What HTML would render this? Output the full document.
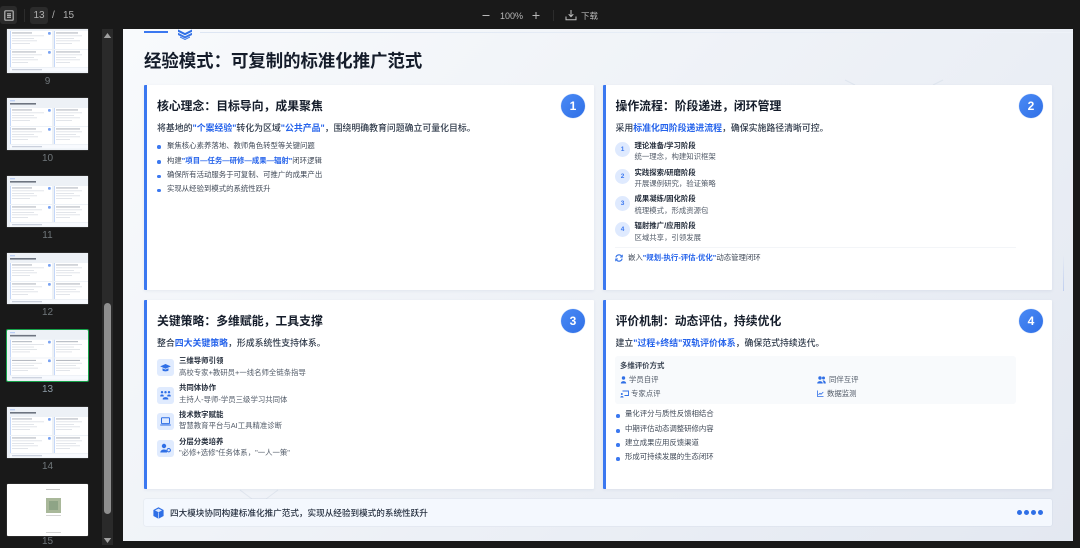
<!DOCTYPE html>
<html lang="zh-CN">
<head>
<meta charset="utf-8">
<title>经验模式</title>
<style>
html,body{margin:0;padding:0;background:#191919;}
body{position:relative;width:1080px;height:545px;overflow:hidden;font-family:"Liberation Sans","Noto Sans CJK SC",sans-serif;filter:blur(.3px);}
div,span.a,svg.a{position:absolute;}
.t{position:absolute;white-space:nowrap;line-height:12px;height:12px;}
.tb{color:#b8b8b8;font-size:9px;}
.pg{color:#b0b0b0;font-size:10px;}
.pn{color:#70777b;font-size:10px;left:7px;width:81px;text-align:center;}
.card{background:#fff;border-left:3px solid #3b78f0;box-sizing:border-box;box-shadow:0 1px 3px rgba(30,60,120,.07);border-radius:1px;}
.h{font-size:11.85px;font-weight:700;color:#141c2a;line-height:14px;height:14px;}
.in{font-size:8.9px;color:#2f3a4a;font-weight:500;}
.in b,.li b,.lp b{color:#2563eb;font-weight:700;}
.li{font-size:7.4px;color:#414a58;}
.lp{font-size:7.4px;color:#414a58;}
.st{font-size:7.4px;color:#262f3d;font-weight:700;}
.su{font-size:7.4px;color:#525b68;}
.dot{width:3.5px;height:3.5px;border-radius:50%;background:#3b78f0;}
.num{width:24px;height:24px;border-radius:50%;background:linear-gradient(135deg,#4a8af5,#2f6fe6);color:#fff;font-weight:700;font-size:12px;line-height:24px;text-align:center;box-shadow:0 0 0 .5px #dbe6fb;}
.c{width:15px;height:15px;border-radius:50%;background:#dfeafe;color:#3b78f0;font-weight:700;font-size:6.5px;line-height:15px;text-align:center;}
.ib{width:17px;height:17px;border-radius:3px;background:#e0ebfe;}
.thumb{left:7px;width:81px;overflow:hidden;box-shadow:0 0 1px #888;}
.thumb svg,.thumb div{filter:blur(.25px);}
</style>
</head>
<body>

<!-- thumbnail art (bars only) -->
<svg width="0" height="0" style="position:absolute">
  <defs>
    <symbol id="th" viewBox="0 0 81 52">
      <rect width="81" height="52" fill="#edf1f6"/>
      <rect x="3" y="2.500" width="5" height=".7" fill="#8fb0f2"/>
      <rect x="3" y="5" width="26" height="1.600" fill="#6d7480"/>
      <rect x="3" y="10" width="42" height="18" fill="#fff"/>
      <rect x="47" y="10" width="34" height="18" fill="#fff"/>
      <rect x="3" y="29" width="42" height="17" fill="#fff"/>
      <rect x="47" y="29" width="34" height="17" fill="#fff"/>
      <rect x="3" y="10" width=".6" height="18" fill="#9dbcf4"/>
      <rect x="47" y="10" width=".6" height="18" fill="#9dbcf4"/>
      <rect x="3" y="29" width=".6" height="17" fill="#9dbcf4"/>
      <rect x="47" y="29" width=".6" height="17" fill="#9dbcf4"/>
      <rect x="41" y="11" width="2.800" height="2.800" rx="1" fill="#7aa3f2"/>
      <rect x="41" y="30" width="2.800" height="2.800" rx="1" fill="#7aa3f2"/>
      <g fill="#a3a9b3">
        <rect x="5" y="11.500" width="20" height=".9"/><rect x="49" y="11.500" width="22" height=".9"/>
        <rect x="5" y="30.500" width="24" height=".9"/><rect x="49" y="30.500" width="24" height=".9"/>
      </g>
      <g fill="#d6dae0">
        <rect x="5" y="14.500" width="32" height=".7"/><rect x="5" y="17" width="22" height=".7"/><rect x="5" y="19.500" width="25" height=".7"/><rect x="5" y="22" width="18" height=".7"/>
        <rect x="49" y="14.500" width="26" height=".7"/><rect x="49" y="17" width="18" height=".7"/><rect x="49" y="19.500" width="24" height=".7"/><rect x="49" y="22" width="16" height=".7"/>
        <rect x="5" y="33.500" width="30" height=".7"/><rect x="5" y="36" width="22" height=".7"/><rect x="5" y="38.500" width="26" height=".7"/><rect x="5" y="41" width="16" height=".7"/>
        <rect x="49" y="33.500" width="26" height=".7"/><rect x="49" y="36" width="20" height=".7"/><rect x="49" y="38.500" width="24" height=".7"/><rect x="49" y="41" width="14" height=".7"/>
      </g>
      <rect x="3" y="47" width="78" height="3.500" fill="#f8fafe"/>
      <rect x="5" y="48.300" width="30" height=".9" fill="#b6bfce"/>
    </symbol>
  </defs>
</svg>

<!-- top bar -->
<div style="left:0;top:0;width:1080px;height:29px;background:#191919;"></div>
<div style="left:0;top:6px;width:17px;height:18px;background:#2b2b2b;border-radius:3px;"></div>
<svg class="a" style="left:4px;top:10px" width="10" height="11" viewBox="0 0 10 11" fill="none" stroke="#b5b5b5" stroke-width="1.200"><rect x=".8" y=".8" width="8.400" height="9.400" rx="1"/><path d="M3 3.800h4M3 5.500h4M3 7.300h4"/></svg>
<div style="left:24px;top:9px;width:1px;height:13px;background:#2c2c2c;"></div>
<div style="left:30px;top:7px;width:18px;height:17px;background:#2b2b2b;border-radius:3px;"></div>
<span class="t pg" style="left:30px;width:18px;text-align:center;top:9.500px;">13</span>
<span class="t pg" style="left:52px;top:9.500px;">/</span>
<span class="t pg" style="left:63px;top:9.500px;">15</span>

<svg class="a" style="left:481px;top:10px" width="10" height="10" viewBox="0 0 10 10" stroke="#b8b8b8" stroke-width="1"><path d="M1.500 5.500h7"/></svg>
<span class="t tb" style="left:500px;top:9.500px;">100%</span>
<svg class="a" style="left:531px;top:10px" width="10" height="11" viewBox="0 0 10 11" stroke="#b8b8b8" stroke-width="1"><path d="M1.500 5.500h7M5 2v7"/></svg>
<div style="left:553px;top:10px;width:1px;height:11px;background:#2c2c2c;"></div>
<svg class="a" style="left:565px;top:9px" width="12" height="12" viewBox="0 0 12 12" fill="none" stroke="#c2c2c2" stroke-width="1"><path d="M6 1v6.500M3.700 5.200 6 7.600l2.300-2.400M1 7.500v3.300h10V7.500"/></svg>
<span class="t" style="left:581px;top:9.500px;color:#b8b8b8;font-size:8.500px;">下载</span>

<!-- sidebar scrollbar -->
<div style="left:102px;top:29px;width:11px;height:516px;background:#2a2a2a;"></div>
<svg class="a" style="left:102px;top:32px" width="11" height="7" viewBox="0 0 11 7"><path d="M1.800 6 5.500 1 9.200 6z" fill="#a0a0a0"/></svg>
<svg class="a" style="left:102px;top:537px" width="11" height="7" viewBox="0 0 11 7"><path d="M1.800 1 5.500 6 9.200 1z" fill="#a0a0a0"/></svg>
<div style="left:104px;top:303px;width:7px;height:211px;background:#8e8e8e;border-radius:3.500px;"></div>

<!-- thumbnails -->
<div class="thumb" style="top:29px;height:44px;"><svg width="81" height="52" style="position:absolute;top:-8px;left:0"><use href="#th"/></svg></div>
<span class="t pn" style="top:75.500px;">9</span>
<div class="thumb" style="top:98px;height:52px;"><svg width="81" height="52"><use href="#th"/></svg></div>
<span class="t pn" style="top:152.500px;">10</span>
<div class="thumb" style="top:176px;height:51px;"><svg width="81" height="52"><use href="#th"/></svg></div>
<span class="t pn" style="top:229.500px;">11</span>
<div class="thumb" style="top:253px;height:51px;"><svg width="81" height="52"><use href="#th"/></svg></div>
<span class="t pn" style="top:306.500px;">12</span>
<div class="thumb" style="top:329px;left:6px;width:83px;height:53px;box-shadow:none;box-sizing:border-box;border:1.500px solid #16a34a;border-radius:2px;"><svg width="81" height="51" preserveAspectRatio="none" viewBox="0 0 81 52"><use href="#th" width="81" height="52"/></svg></div>
<span class="t pn" style="top:383.500px;color:#8c9aa5;">13</span>
<div class="thumb" style="top:407px;height:51px;"><svg width="81" height="52"><use href="#th"/></svg></div>
<span class="t pn" style="top:460.500px;">14</span>
<div class="thumb" style="top:484px;height:52px;background:#fff;border-radius:1px;">
  <div style="left:39px;top:4.500px;width:14px;height:1.200px;background:#c9c9c9;"></div>
  <div style="left:39px;top:14px;width:15px;height:15px;background:#a9b89a;"></div>
  <div style="left:42px;top:17px;width:9px;height:9px;background:#8ea486;"></div>
  <div style="left:39px;top:31px;width:15px;height:1.200px;background:#d4d4d4;"></div>
  <div style="left:39px;top:48px;width:15px;height:1.200px;background:#d4d4d4;"></div>
</div>
<span class="t pn" style="top:536px;">15</span>

<!-- slide -->
<div style="left:123px;top:29px;width:950px;height:512px;background:linear-gradient(135deg,#f8fafc 0%,#e3e8f1 100%);overflow:hidden;">
  <div style="left:21px;top:2px;width:24px;height:2px;background:#3b78f0;"></div>
  <div style="left:77px;top:2.500px;width:873px;height:1.500px;background:linear-gradient(90deg,#dde6f3,#eef2f8);"></div>
  <div style="left:940px;top:226px;width:1px;height:36px;background:linear-gradient(180deg,rgba(100,140,230,0),rgba(100,140,230,.3));"></div>
  <svg style="position:absolute;left:0;top:0" width="950" height="512" fill="none" stroke="#dfe5ee" stroke-width="1"><path d="M722 51 732 56M810 56 820 51"/><path d="M117 461 129 470H143L155 461"/></svg>
</div>
<svg class="a" style="left:177px;top:29px" width="16" height="11" viewBox="0 0 16 11" fill="#2f6fe6"><path d="M1 0.500 8 4 15 0.500V2.800L8 6.200 1 2.800z"/><path d="M1 3.800 8 7.300 15 3.800V6L8 9.500 1 6z" opacity=".95"/><path d="M3 7.500 8 10 13 7.500V8.500L8 11 3 8.500z"/></svg>
<span class="t" style="left:144px;top:50px;height:22px;line-height:22px;font-size:17.400px;font-weight:700;color:#141c2a;">经验模式：可复制的标准化推广范式</span>

<!-- card 1 -->
<div class="card" style="left:144px;top:85px;width:450px;height:205px;"></div>
<span class="t h" style="left:157px;top:98.500px;">核心理念：目标导向，成果聚焦</span>
<div class="num" style="left:561px;top:94px;">1</div>
<span class="t in" style="left:157px;top:121.500px;">将基地的<b>"个案经验"</b>转化为区域<b>"公共产品"</b>，围绕明确教育问题确立可量化目标。</span>
<div class="dot" style="left:157px;top:145px;"></div>
<span class="t li" style="left:167px;top:139.500px;">聚焦核心素养落地、教师角色转型等关键问题</span>
<div class="dot" style="left:157px;top:160px;"></div>
<span class="t li" style="left:167px;top:154.500px;">构建<b>"项目—任务—研修—成果—辐射"</b>闭环逻辑</span>
<div class="dot" style="left:157px;top:174.500px;"></div>
<span class="t li" style="left:167px;top:169px;">确保所有活动服务于可复制、可推广的成果产出</span>
<div class="dot" style="left:157px;top:188.500px;"></div>
<span class="t li" style="left:167px;top:183px;">实现从经验到模式的系统性跃升</span>

<!-- card 2 -->
<div class="card" style="left:603px;top:85px;width:449px;height:205px;"></div>
<span class="t h" style="left:615.500px;top:98.500px;">操作流程：阶段递进，闭环管理</span>
<div class="num" style="left:1019px;top:94px;">2</div>
<span class="t in" style="left:615.500px;top:121.500px;">采用<b>标准化四阶段递进流程</b>，确保实施路径清晰可控。</span>
<div class="c" style="left:615px;top:142px;">1</div>
<span class="t st" style="left:634.500px;top:139.500px;">理论准备/学习阶段</span>
<span class="t su" style="left:634.500px;top:151px;">统一理念，构建知识框架</span>
<div class="c" style="left:615px;top:169px;">2</div>
<span class="t st" style="left:634.500px;top:166.500px;">实践探索/研磨阶段</span>
<span class="t su" style="left:634.500px;top:177.500px;">开展课例研究，验证策略</span>
<div class="c" style="left:615px;top:196px;">3</div>
<span class="t st" style="left:634.500px;top:193px;">成果凝练/固化阶段</span>
<span class="t su" style="left:634.500px;top:204.500px;">梳理模式，形成资源包</span>
<div class="c" style="left:615px;top:222px;">4</div>
<span class="t st" style="left:634.500px;top:219.500px;">辐射推广/应用阶段</span>
<span class="t su" style="left:634.500px;top:231.500px;">区域共享，引领发展</span>
<div style="left:615px;top:247px;width:401px;height:1px;background:#f3f5f8;"></div>
<svg class="a" style="left:615px;top:254px" width="8" height="8" viewBox="0 0 8 8" fill="none" stroke="#2f6fe6" stroke-width="1.100"><path d="M.9 3.400A3.200 3.200 0 0 1 6.500 2L7.200 2.900M7.100 4.600A3.200 3.200 0 0 1 1.500 6L.8 5.100"/><path d="M7.300 .8v2.300H5M.7 7.200V4.900H3" stroke-width=".9"/></svg>
<span class="t li" style="left:628px;top:252px;">嵌入<b>"规划-执行-评估-优化"</b>动态管理闭环</span>

<!-- card 3 -->
<div class="card" style="left:144px;top:300px;width:450px;height:189px;"></div>
<span class="t h" style="left:157px;top:314px;">关键策略：多维赋能，工具支撑</span>
<div class="num" style="left:561px;top:309px;">3</div>
<span class="t in" style="left:157px;top:337px;">整合<b>四大关键策略</b>，形成系统性支持体系。</span>

<div class="ib" style="left:157px;top:359px;"></div>
<svg class="a" style="left:160px;top:362.500px" width="11" height="10" viewBox="0 0 11 10" fill="#2f6fe6"><path d="M5.500 1 10.800 3.400 5.500 5.800.2 3.400z"/><path d="M2.500 5.200V7.500C3.500 8.600 7.500 8.600 8.500 7.500V5.200L5.500 6.600z"/></svg>
<span class="t st" style="left:179px;top:355px;">三维导师引领</span>
<span class="t su" style="left:179px;top:366.500px;">高校专家+教研员+一线名师全链条指导</span>

<div class="ib" style="left:157px;top:386.500px;"></div>
<svg class="a" style="left:160px;top:390px" width="11" height="10" viewBox="0 0 11 10" fill="#2f6fe6"><circle cx="2" cy="2.200" r="1.200"/><circle cx="5.500" cy="2.200" r="1.200"/><circle cx="9" cy="2.200" r="1.200"/><path d="M.3 5.500C.5 4.200 3.500 4.200 3.700 5.500V6.500H.3zM7.300 5.500C7.500 4.200 10.500 4.200 10.700 5.500V6.500H7.300z"/><path d="M2.700 8.800C3 6.500 8 6.500 8.300 8.800V9.500H2.700z"/></svg>
<span class="t st" style="left:179px;top:382px;">共同体协作</span>
<span class="t su" style="left:179px;top:393.500px;">主持人-导师-学员三级学习共同体</span>

<div class="ib" style="left:157px;top:413px;"></div>
<svg class="a" style="left:160px;top:417px" width="11" height="9" viewBox="0 0 11 9" fill="none" stroke="#2f6fe6" stroke-width="1"><rect x="1.500" y=".8" width="8" height="5.800" rx=".6"/><path d="M.2 8h10.600"/></svg>
<span class="t st" style="left:179px;top:409px;">技术数字赋能</span>
<span class="t su" style="left:179px;top:420px;">智慧教育平台与AI工具精准诊断</span>

<div class="ib" style="left:157px;top:440px;"></div>
<svg class="a" style="left:160px;top:443px" width="11" height="11" viewBox="0 0 11 11" fill="#2f6fe6"><circle cx="4" cy="3" r="2.200"/><path d="M.3 9.500C.5 5.800 6.500 5.800 7 8.200V9.500z"/><circle cx="8.700" cy="7.200" r="1.700" fill="none" stroke="#2f6fe6" stroke-width="1"/></svg>
<span class="t st" style="left:179px;top:436px;">分层分类培养</span>
<span class="t su" style="left:179px;top:447px;">"必修+选修"任务体系，"一人一策"</span>

<!-- card 4 -->
<div class="card" style="left:603px;top:300px;width:449px;height:189px;"></div>
<span class="t h" style="left:615.500px;top:314px;">评价机制：动态评估，持续优化</span>
<div class="num" style="left:1019px;top:309px;">4</div>
<span class="t in" style="left:615.500px;top:337px;">建立<b>"过程+终结"双轨评价体系</b>，确保范式持续迭代。</span>
<div style="left:615px;top:356px;width:401px;height:48px;background:#f8fafc;border-radius:3px;"></div>
<span class="t st" style="left:620px;top:360px;color:#3b4554;">多维评价方式</span>
<svg class="a" style="left:619.500px;top:376px" width="7" height="8" viewBox="0 0 7 8" fill="#2f6fe6"><circle cx="3.500" cy="2" r="1.700"/><path d="M.8 7.500C.8 4.300 6.200 4.300 6.200 7.500z"/></svg>
<span class="t su" style="left:629px;top:373.500px;">学员自评</span>
<svg class="a" style="left:817px;top:376px" width="9" height="8" viewBox="0 0 9 8" fill="#2f6fe6"><circle cx="3" cy="2" r="1.700"/><circle cx="6.500" cy="2" r="1.500"/><path d="M.2 7.500C.2 4.300 5.800 4.300 5.800 7.500zM6.600 7.500C6.600 6 6 5 5.500 4.500 7.200 4 8.800 5.200 8.800 7.500z"/></svg>
<span class="t su" style="left:829px;top:373.500px;">同伴互评</span>
<svg class="a" style="left:619.500px;top:389.500px" width="9" height="8" viewBox="0 0 9 8" fill="none" stroke="#2f6fe6" stroke-width=".9"><path d="M2.500 1h6v4.500H4.500"/><circle cx="1.800" cy="4" r="1" fill="#2f6fe6" stroke="none"/><path d="M.3 7.500C.3 5.500 3.600 5.500 3.600 7.500z" fill="#2f6fe6" stroke="none"/></svg>
<span class="t su" style="left:631px;top:388px;">专家点评</span>
<svg class="a" style="left:817px;top:390px" width="7" height="7" viewBox="0 0 7 7" fill="none" stroke="#2f6fe6" stroke-width=".8"><path d="M.5.500v6h6M1.500 4.800 3 3.300l1 1 2.300-2.300"/></svg>
<span class="t su" style="left:827px;top:388px;">数据监测</span>
<div class="dot" style="left:616px;top:414px;"></div>
<span class="t lp" style="left:625px;top:408px;">量化评分与质性反馈相结合</span>
<div class="dot" style="left:616px;top:429px;"></div>
<span class="t lp" style="left:625px;top:422.500px;">中期评估动态调整研修内容</span>
<div class="dot" style="left:616px;top:443px;"></div>
<span class="t lp" style="left:625px;top:437px;">建立成果应用反馈渠道</span>
<div class="dot" style="left:616px;top:457px;"></div>
<span class="t lp" style="left:625px;top:451px;">形成可持续发展的生态闭环</span>

<!-- bottom bar -->
<div style="left:144px;top:499px;width:908px;height:27px;background:#f4f8fe;border-radius:2px;box-shadow:0 0 1px rgba(120,140,180,.4);"></div>
<svg class="a" style="left:153px;top:507px" width="11" height="12" viewBox="0 0 11 12" fill="#2f6fe6"><path d="M5.500 .3 10.600 3v6L5.500 11.700.4 9V3z"/><path d="M5.500 1.600 9 3.400 5.500 5.200 2 3.400z" fill="#dbe7fd"/><path d="M5.500 5.500v6" stroke="#dbe7fd" stroke-width=".7"/></svg>
<span class="t" style="left:170px;top:506.500px;font-size:8.600px;font-weight:500;color:#263040;">四大模块协同构建标准化推广范式，实现从经验到模式的系统性跃升</span>
<div style="left:1017px;top:509.500px;width:5px;height:5px;border-radius:50%;background:#2f6fe6;"></div>
<div style="left:1024px;top:509.500px;width:5px;height:5px;border-radius:50%;background:#2f6fe6;"></div>
<div style="left:1031px;top:509.500px;width:5px;height:5px;border-radius:50%;background:#2f6fe6;"></div>
<div style="left:1038px;top:509.500px;width:5px;height:5px;border-radius:50%;background:#2f6fe6;"></div>

</body>
</html>
